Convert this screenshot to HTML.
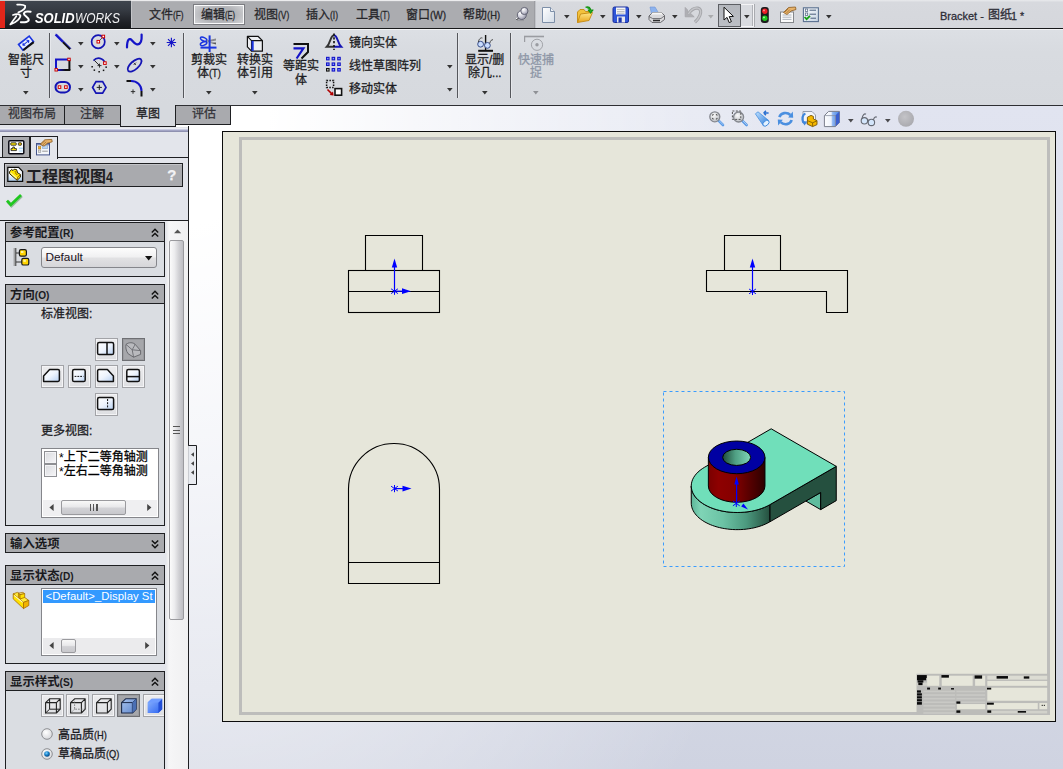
<!DOCTYPE html>
<html lang="zh"><head><meta charset="utf-8"><title>Bracket - 图纸1 * - SOLIDWORKS</title>
<style>
html,body{margin:0;padding:0}
body{width:1063px;height:769px;position:relative;overflow:hidden;background:#d8dbe0;font-family:"Liberation Sans",sans-serif}
#app{position:absolute;left:0;top:0;width:1063px;height:769px;overflow:hidden}
#app>div,#app>svg{position:absolute}
svg.t,svg.i{overflow:visible;display:block}
svg.t text{font-family:"Liberation Sans","Noto Sans CJK SC",sans-serif}
.lt{white-space:nowrap;line-height:1.15;font-family:"Liberation Sans",sans-serif}
.lg{font-family:"Liberation Sans",sans-serif;font-style:italic;font-size:14.2px;color:#fff;white-space:nowrap;line-height:1.15;transform:scaleX(.91);transform-origin:0 0}
.lw{font-weight:normal;color:#f1f1f3;transform:scaleX(.84)}
</style></head><body>
<div id="app">
<div style="left:189px;top:106px;width:874px;height:663px;background:radial-gradient(ellipse 660px 990px at 0% 0%,#fff 0%,#fff 12%,rgba(255,255,255,0) 100%),linear-gradient(180deg,#e1e4f0 0%,#dbdeec 45%,#d2d6e3 88%,#cfd3e1 100%)"></div>
<div style="left:222px;top:131px;width:834px;height:591px;box-sizing:border-box;background:#e6e6da;border:1px solid #0c0c0c"></div>
<div style="left:239px;top:137px;width:811px;height:578px;box-sizing:border-box;border:3px solid #bdbdbb"></div>
<svg class="i" style="left:708px;top:110px;" width="18" height="18"><defs><radialGradient id="mg" cx=".4" cy=".35" r=".7"><stop offset="0" stop-color="#fafafa"/><stop offset="1" stop-color="#b9bcc2"/></radialGradient><linearGradient id="hb" x1="0" y1="0" x2="1" y2="1"><stop offset="0" stop-color="#bfe0ff"/><stop offset="1" stop-color="#2a7ad8"/></linearGradient></defs><path d="M10.6 10.6L15 15" stroke="#5a9ae6" stroke-width="2.6" stroke-linecap="round"/><path d="M10.8 10.4L15 14.6" stroke="#b8d8fa" stroke-width=".8" stroke-linecap="round"/><circle cx="6.8" cy="6.8" r="5" fill="url(#mg)" stroke="#85888f" stroke-width="1.3"/><path d="M4.6 5.7V4.6H5.7M7.9 4.6H9V5.7M9 7.9V9H7.9M5.7 9H4.6V7.9" fill="none" stroke="#555" stroke-width="1"/></svg>
<svg class="i" style="left:731px;top:110px;" width="18" height="18"><path d="M11.4 10.8L15.6 15" stroke="#5a9ae6" stroke-width="2.6" stroke-linecap="round"/><path d="M11.6 10.6L15.6 14.6" stroke="#b8d8fa" stroke-width=".8" stroke-linecap="round"/><circle cx="7.6" cy="7" r="5" fill="url(#mg)" stroke="#85888f" stroke-width="1.3"/><rect x="1.4" y="1" width="8.4" height="8.4" fill="none" stroke="#555" stroke-width="1" stroke-dasharray="2 1.4"/></svg>
<svg class="i" style="left:754px;top:110px;" width="18" height="18"><path d="M1.4 3.8L4 1.8L14.8 10.6L9.4 15.8Z" fill="url(#hb)" stroke="#3a86dc" stroke-width=".7" stroke-linejoin="round"/><ellipse cx="12" cy="13.2" rx="3.6" ry="2.3" transform="rotate(-42 12 13.2)" fill="#e4f2ff" stroke="#3a86dc" stroke-width=".9"/><path d="M9.6 3H14.6M9.6 3L12 .9M9.6 3L12 5.1" fill="none" stroke="#2a6fd0" stroke-width="1.4"/></svg>
<svg class="i" style="left:777px;top:110px;" width="18" height="18"><path d="M2.4 7.2C3.6 2.6 10 1.6 13.4 5" fill="none" stroke="#4a8fe0" stroke-width="2.6"/><path d="M11.2 7.4L16.2 7.8L15.8 1.6Z" fill="#4a8fe0"/><path d="M14.6 10C13.4 14.6 7 15.6 3.6 12.2" fill="none" stroke="#4a8fe0" stroke-width="2.6"/><path d="M5.8 9.8L.8 9.4L1.2 15.6Z" fill="#4a8fe0"/></svg>
<svg class="i" style="left:800px;top:110px;" width="19" height="18"><path d="M3 1.5H12L15.5 5V13H3Z" fill="#f2f4f8" stroke="#8a93a4" stroke-width=".9"/><path d="M5.4 3.6C2.4 4.8 1.4 9 3.6 12.6" fill="none" stroke="#3f86dc" stroke-width="2.2"/><path d="M1.6 11L4.6 15.4L7.2 11.4Z" fill="#3f86dc"/><path d="M7.4 7.2L11 5.4L13.4 6.4V9L17 10.6V14.6L12.6 16.6L7.4 14.2Z" fill="#f5b800" stroke="#7a5600" stroke-width=".9" stroke-linejoin="round"/><path d="M7.4 10.6L12.6 12.8L17 10.8M12.6 12.8V16.4" fill="none" stroke="#7a5600" stroke-width=".8"/></svg>
<svg class="i" style="left:823px;top:110px;" width="18" height="18"><defs><linearGradient id="hc" x1="0" y1="0" x2="1" y2="0"><stop offset="0" stop-color="#fdfdfe"/><stop offset=".45" stop-color="#eef3fb"/><stop offset=".55" stop-color="#8db6f2"/><stop offset="1" stop-color="#4a86e4"/></linearGradient></defs><path d="M1.4 5.6L5.6 1.4H16.4V12.4L12.4 16.6H1.4Z" fill="url(#hc)" stroke="#7a7f8c" stroke-width="1" stroke-linejoin="round"/><path d="M12.4 5.6L16.4 1.4V12.4L12.4 16.6Z" fill="#3a5fd0"/><path d="M1.4 5.6H12.4V16.6" fill="none" stroke="#8a90a0" stroke-width=".8"/></svg>
<svg class="i" style="left:848px;top:119px;" width="6" height="4"><path d="M0 0H5.6L2.8 3.4Z" fill="#4a4a4e"/></svg>
<svg class="i" style="left:860px;top:112px;" width="18" height="15"><circle cx="4.4" cy="8.8" r="3.2" fill="#d4e6fb" stroke="#666a74" stroke-width="1.1"/><circle cx="11.4" cy="10.4" r="3.2" fill="#d4e6fb" stroke="#666a74" stroke-width="1.1"/><path d="M7.4 8.6C8 7.8 8.6 8 8.8 8.8M2 6.6C2.6 3 4.4 1.2 6 2.2M13.4 7.8C14.2 5.2 15.6 4.4 16.8 5.2" fill="none" stroke="#666a74" stroke-width="1.1"/></svg>
<svg class="i" style="left:885px;top:119px;" width="6" height="4"><path d="M0 0H5.6L2.8 3.4Z" fill="#4a4a4e"/></svg>
<svg class="i" style="left:897px;top:110px;" width="18" height="18"><defs><radialGradient id="gs" cx=".42" cy=".38" r=".65"><stop offset="0" stop-color="#c4c4c8"/><stop offset="1" stop-color="#a9a9ae"/></radialGradient></defs><circle cx="9" cy="8.8" r="8" fill="url(#gs)"/></svg>
<svg class="i" style="left:189px;top:106px;" width="874" height="663" viewBox="189 106 874 663"><g fill="none" stroke="#000" stroke-width="1.1"><path d="M365.5 270.5V235.5H422.5V270.5"/><rect x="348.5" y="270.5" width="91" height="42"/><path d="M348.5 291.5H439.5"/><path d="M724.5 270.5V235.5H780.5V270.5"/><path d="M706.5 270.5H847.5V312.5H826.5V291.5H706.5Z"/><path d="M348.5 583.5V489A45.5 45.5 0 0 1 439.5 489V583.5Z"/><path d="M348.5 562.5H439.5"/></g><path d="M394.5 291V264.5" stroke="#0000ff" stroke-width="1.2"/><path d="M394.5 258.5L397.2 267.5H391.8Z" fill="#0000ff"/><path d="M394.5 291.2H405" stroke="#0000ff" stroke-width="1.2"/><path d="M411 291.2L402 288.3V294.1Z" fill="#0000ff"/><path d="M394.5 287.6V294.8M391.1 288.8L397.9 293.6M397.9 288.8L391.1 293.6" stroke="#0000ff" stroke-width="1" fill="none"/><path d="M752.5 291V264.5" stroke="#0000ff" stroke-width="1.2"/><path d="M752.5 258.5L755.2 267.5H749.8Z" fill="#0000ff"/><path d="M752.5 287.8V295M749.1 289L755.9 293.8M755.9 289L749.1 293.8" stroke="#0000ff" stroke-width="1" fill="none"/><path d="M394.5 488.6H405.5" stroke="#0000ff" stroke-width="1.2"/><path d="M411.5 488.6L402.5 485.7V491.5Z" fill="#0000ff"/><path d="M394.5 485V492.2M391.1 486.2L397.9 491M397.9 486.2L391.1 491" stroke="#0000ff" stroke-width="1" fill="none"/><rect x="663.5" y="391.5" width="181" height="175" fill="none" stroke="#3a9cff" stroke-width="1" stroke-dasharray="3 3"/><defs><linearGradient id="cyl" x1="0" y1="0" x2="1" y2="0"><stop offset="0" stop-color="#7a0000"/><stop offset=".18" stop-color="#8e0000"/><stop offset=".45" stop-color="#860000"/><stop offset=".7" stop-color="#5c0000"/><stop offset="1" stop-color="#2c0000"/></linearGradient><linearGradient id="rnd" x1="0" y1="0" x2="1" y2="0"><stop offset="0" stop-color="#5cb598"/><stop offset=".12" stop-color="#7fd4b6"/><stop offset=".4" stop-color="#6cc3a5"/><stop offset=".7" stop-color="#4c9a7f"/><stop offset="1" stop-color="#25503f"/></linearGradient><linearGradient id="hol" x1="0" y1="0" x2="1" y2="0"><stop offset="0" stop-color="#1f4a3a"/><stop offset=".45" stop-color="#4f9f83"/><stop offset="1" stop-color="#7fd6b8"/></linearGradient></defs><path d="M820.70 492.48L820.70 509.63L805.85 501.05Z" fill="#5fbc9e" stroke="#000" stroke-width="1" stroke-linejoin="round"/><path d="M836.25 466.35L769.79 504.73L769.79 521.87L820.70 492.48L820.70 509.63L836.25 500.65Z" fill="#25503f" stroke="#000" stroke-width="1" stroke-linejoin="round"/><path d="M769.79 504.73L767.81 505.80L765.74 506.80L763.56 507.73L761.29 508.59L758.94 509.37L756.52 510.06L754.02 510.68L751.47 511.20L748.87 511.64L746.23 511.99L743.56 512.25L740.87 512.42L738.16 512.50L735.45 512.48L732.75 512.38L730.06 512.18L727.40 511.89L724.77 511.51L722.19 511.04L719.66 510.48L717.18 509.84L714.78 509.12L712.46 508.31L710.22 507.43L708.08 506.48L706.03 505.45L704.10 504.35L702.28 503.19L700.58 501.98L699.01 500.70L697.57 499.38L696.27 498.00L695.11 496.59L694.10 495.14L693.24 493.66L692.53 492.15L691.98 490.62L691.58 489.07L691.34 487.51L691.26 485.95L691.26 503.09L691.34 504.66L691.58 506.22L691.98 507.76L692.53 509.29L693.24 510.80L694.10 512.29L695.11 513.74L696.27 515.15L697.57 516.52L699.01 517.85L700.58 519.12L702.28 520.34L704.10 521.50L706.03 522.59L708.08 523.62L710.22 524.58L712.46 525.46L714.78 526.26L717.18 526.99L719.66 527.63L722.19 528.18L724.77 528.65L727.40 529.03L730.06 529.32L732.75 529.52L735.45 529.63L738.16 529.64L740.87 529.57L743.56 529.40L746.23 529.14L748.87 528.79L751.47 528.35L754.02 527.82L756.52 527.21L758.94 526.51L761.29 525.74L763.56 524.88L765.74 523.95L767.81 522.94L769.79 521.87Z" fill="url(#rnd)" stroke="#000" stroke-width="1" stroke-linejoin="round"/><path d="M771.20 428.80L836.25 466.35L769.79 504.73L767.13 506.14L764.30 507.43L761.29 508.59L758.14 509.61L754.86 510.48L751.47 511.20L748.00 511.77L744.46 512.18L740.87 512.42L737.26 512.50L733.65 512.42L730.06 512.18L726.52 511.77L723.04 511.20L719.66 510.48L716.38 509.61L713.22 508.59L710.22 507.43L707.38 506.14L704.73 504.73L702.28 503.19L700.04 501.56L698.04 499.82L696.27 498.00L694.76 496.11L693.51 494.15L692.53 492.15L691.83 490.10L691.40 488.03L691.26 485.95L691.40 483.86L691.83 481.79L692.53 479.75L693.51 477.74L694.76 475.79L696.27 473.89L698.04 472.07L700.04 470.34L702.28 468.70L704.73 467.17Z" fill="#70dfba" stroke="#000" stroke-width="1" stroke-linejoin="round"/><path d="M708.36 457.37V485.95A28.30 16.34 0 0 0 764.96 485.95V457.37Z" fill="url(#cyl)" stroke="#000" stroke-width="1"/><ellipse cx="736.66" cy="457.37" rx="28.30" ry="16.34" fill="#0000a2" stroke="#000" stroke-width="1"/><ellipse cx="736.66" cy="457.37" rx="14.00" ry="8.08" fill="url(#hol)" stroke="#000" stroke-width="1"/><clipPath id="hc2"><ellipse cx="736.66" cy="457.37" rx="13.50" ry="7.58"/></clipPath><path d="M736.6 503.4V483" stroke="#0000ff" stroke-width="1.2"/><path d="M736.6 476.6L738.9 484.4H734.3Z" fill="#0000ff"/><path d="M736.3 499.8V507M732.9 501L739.7 505.8M739.7 501L732.9 505.8" stroke="#0000ff" stroke-width="1" fill="none"/><path d="M741.2 506.6L748 509.6L743.4 503.6Z" fill="#0000ff"/></svg>
<svg class="i" style="left:910px;top:670px;filter:blur(.3px)" width="145" height="48" viewBox="910 670 145 48"><rect x="916.53" y="673.76" width="131.65" height="40.52" fill="#bcbcb9"/><rect x="927.10" y="675.71" width="12.21" height="10.09" fill="#e6e6da"/><rect x="941.75" y="675.71" width="30.92" height="10.09" fill="#e6e6da"/><rect x="975.11" y="675.71" width="10.09" height="10.09" fill="#e6e6da"/><rect x="917.34" y="682.55" width="9.76" height="3.25" fill="#d4d4cd"/><rect x="987.31" y="675.71" width="59.89" height="3.91" fill="#dcdcd3"/><rect x="987.31" y="680.92" width="59.89" height="4.88" fill="#e6e6da"/><rect x="987.31" y="687.75" width="59.89" height="13.02" fill="#e6e6da"/><rect x="987.31" y="703.05" width="50.45" height="6.18" fill="#e6e6da"/><rect x="1039.39" y="703.05" width="7.81" height="6.18" fill="#e6e6da"/><rect x="987.31" y="710.86" width="59.89" height="2.60" fill="#d2d2cb"/><rect x="923.36" y="690.68" width="31.73" height="1.63" fill="#c9c9c5"/><rect x="956.40" y="690.68" width="28.80" height="1.63" fill="#c9c9c5"/><rect x="923.36" y="694.26" width="31.73" height="1.63" fill="#c9c9c5"/><rect x="956.40" y="694.26" width="28.80" height="1.63" fill="#c9c9c5"/><rect x="923.36" y="697.84" width="31.73" height="1.63" fill="#c9c9c5"/><rect x="956.40" y="697.84" width="28.80" height="1.63" fill="#c9c9c5"/><rect x="923.36" y="701.42" width="31.73" height="1.63" fill="#c9c9c5"/><rect x="956.40" y="701.42" width="28.80" height="1.63" fill="#c9c9c5"/><rect x="923.36" y="705.00" width="31.73" height="1.63" fill="#c9c9c5"/><rect x="923.36" y="708.58" width="31.73" height="1.63" fill="#c9c9c5"/><rect x="923.36" y="712.16" width="31.73" height="1.63" fill="#c9c9c5"/><rect x="957.05" y="704.03" width="28.15" height="5.21" fill="#e6e6da"/><rect x="917.01" y="675.06" width="9.76" height="2.93" fill="#0a0a0a"/><rect x="917.01" y="677.99" width="9.11" height="2.28" fill="#0a0a0a"/><rect x="917.66" y="680.27" width="5.70" height="2.28" fill="#0a0a0a"/><rect x="918.32" y="682.55" width="4.23" height="2.60" fill="#0a0a0a"/><rect x="941.42" y="675.06" width="7.49" height="2.60" fill="#0a0a0a"/><rect x="974.62" y="675.39" width="7.49" height="3.25" fill="#0a0a0a"/><rect x="996.59" y="676.04" width="11.39" height="2.60" fill="#0a0a0a"/><rect x="1023.77" y="676.36" width="5.53" height="2.28" fill="#0a0a0a"/><rect x="927.10" y="687.59" width="2.93" height="1.95" fill="#0a0a0a"/><rect x="938.17" y="687.59" width="2.77" height="1.95" fill="#0a0a0a"/><rect x="951.03" y="688.08" width="2.93" height="1.46" fill="#0a0a0a"/><rect x="986.99" y="687.75" width="4.23" height="1.79" fill="#0a0a0a"/><rect x="917.01" y="690.36" width="3.91" height="2.28" fill="#0a0a0a"/><rect x="917.01" y="693.29" width="4.88" height="2.28" fill="#0a0a0a"/><rect x="917.01" y="696.22" width="4.88" height="2.28" fill="#0a0a0a"/><rect x="917.01" y="699.15" width="4.88" height="2.28" fill="#0a0a0a"/><rect x="917.01" y="702.07" width="4.88" height="2.60" fill="#0a0a0a"/><rect x="956.40" y="701.42" width="3.91" height="2.28" fill="#0a0a0a"/><rect x="986.99" y="702.73" width="6.83" height="1.95" fill="#0a0a0a"/><rect x="956.40" y="710.37" width="3.91" height="2.44" fill="#0a0a0a"/><rect x="987.31" y="710.37" width="3.91" height="2.44" fill="#0a0a0a"/><rect x="1017.75" y="711.03" width="8.30" height="1.63" fill="#0a0a0a"/><rect x="1041.67" y="704.84" width="1.14" height="0.98" fill="#0a0a0a"/><rect x="1043.78" y="704.84" width="1.14" height="0.98" fill="#0a0a0a"/></svg>
<div style="left:0px;top:0px;width:131px;height:28px;background:linear-gradient(#40464f 0%,#363b43 35%,#1f2126 80%,#17191d 100%)"></div>
<div style="left:0px;top:0px;width:5px;height:28px;background:#e2261a"></div>
<div style="left:0px;top:0px;width:131px;height:1px;background:#c9cacc"></div>
<div style="left:131px;top:0px;width:404px;height:28px;background:linear-gradient(#ececee 0,#ececee 1px,#b9babe 1px,#abacb0 2.4px,#abacb0 100%)"></div>
<div style="left:131px;top:1px;width:1px;height:27px;background:#c4c5c9"></div>
<div style="left:534px;top:1px;width:1px;height:27px;background:#9c9da2"></div>
<div style="left:535px;top:0px;width:528px;height:28px;background:linear-gradient(#e9eaed 0%,#d7d9de 8%,#d5d7dc 100%)"></div>
<div style="left:535px;top:1px;width:1px;height:27px;background:#c2c4c9"></div>
<div style="left:0px;top:28px;width:1063px;height:1px;background:#17181a"></div>
<div style="left:0px;top:29px;width:1063px;height:1px;background:#f3f4f6"></div>
<svg class="i" style="left:8.8px;top:3px;" width="24" height="24"><g fill="none" stroke="#fff" stroke-linecap="round" stroke-linejoin="round">
<path d="M8.2 1.7C11 1.4 14.8 1.6 16.2 2.9C16.6 4.8 14 7.6 9.4 9.4" stroke-width="1.8"/>
<path d="M3.9 12C6 11.3 9.8 10.8 11.4 12.4C11.8 15 7.6 19.4 1.3 21.5C3.2 18.8 5.6 15.4 7.3 13.2" stroke-width="1.7"/>
<path d="M21.6 8.7C19 8.3 15.3 8.6 14.9 10.6C14.7 12.6 19.4 14.4 19.7 16.6C20 19 15.6 19.5 11.8 19.2" stroke-width="2"/></g></svg>
<div class="lg" style="left:35.2px;top:9.6px"><b>SOLID</b></div>
<div class="lg lw" style="left:75px;top:9.6px">WORKS</div>
<svg class="t" role="img" aria-label="文件(F)" style="left:148.5px;top:7.2px" width="37" height="19" fill="#26262a" stroke="#26262a" stroke-width="22"><text stroke-width=".26" x="0" y="12.20" font-size="12">文件</text><text stroke-width=".28" x="24.00" y="12.20" font-size="10.80" textLength="10.62" lengthAdjust="spacingAndGlyphs" xml:space="preserve">(F)</text></svg>
<div style="left:193px;top:4px;width:52px;height:21px;border:1px solid #7c7d82;box-sizing:border-box;background:radial-gradient(ellipse 60% 75% at 50% 50%,#aeafb3 0%,#b3b4b8 55%,#d2d3d6 100%);box-shadow:inset 0 0 0 1px #fafafb"></div>
<svg class="t" role="img" aria-label="编辑(E)" style="left:201px;top:7.2px" width="37" height="19" fill="#26262a" stroke="#26262a" stroke-width="22"><text stroke-width=".26" x="0" y="12.20" font-size="12">编辑</text><text stroke-width=".28" x="24.00" y="12.20" font-size="10.80" textLength="10.08" lengthAdjust="spacingAndGlyphs" xml:space="preserve">(E)</text></svg>
<svg class="t" role="img" aria-label="视图(V)" style="left:253.5px;top:7.2px" width="38" height="19" fill="#26262a" stroke="#26262a" stroke-width="22"><text stroke-width=".26" x="0" y="12.20" font-size="12">视图</text><text stroke-width=".28" x="24.00" y="12.20" font-size="10.80" textLength="11.23" lengthAdjust="spacingAndGlyphs" xml:space="preserve">(V)</text></svg>
<svg class="t" role="img" aria-label="插入(I)" style="left:306px;top:7.2px" width="35" height="19" fill="#26262a" stroke="#26262a" stroke-width="22"><text stroke-width=".26" x="0" y="12.20" font-size="12">插入</text><text stroke-width=".28" x="24.00" y="12.20" font-size="10.80" textLength="8.05" lengthAdjust="spacingAndGlyphs" xml:space="preserve">(I)</text></svg>
<svg class="t" role="img" aria-label="工具(T)" style="left:355.5px;top:7.2px" width="36" height="19" fill="#26262a" stroke="#26262a" stroke-width="22"><text stroke-width=".26" x="0" y="12.20" font-size="12">工具</text><text stroke-width=".28" x="24.00" y="12.20" font-size="10.80" textLength="9.65" lengthAdjust="spacingAndGlyphs" xml:space="preserve">(T)</text></svg>
<svg class="t" role="img" aria-label="窗口(W)" style="left:406px;top:7.2px" width="43" height="19" fill="#26262a" stroke="#26262a" stroke-width="22"><text stroke-width=".26" x="0" y="12.20" font-size="12">窗口</text><text stroke-width=".28" x="24.00" y="12.20" font-size="10.80" textLength="16.17" lengthAdjust="spacingAndGlyphs" xml:space="preserve">(W)</text></svg>
<svg class="t" role="img" aria-label="帮助(H)" style="left:462.5px;top:7.2px" width="40" height="19" fill="#26262a" stroke="#26262a" stroke-width="22"><text stroke-width=".26" x="0" y="12.20" font-size="12">帮助</text><text stroke-width=".28" x="24.00" y="12.20" font-size="10.80" textLength="13.04" lengthAdjust="spacingAndGlyphs" xml:space="preserve">(H)</text></svg>
<svg class="i" style="left:515px;top:6px;" width="15" height="16"><defs><radialGradient id="pn" cx=".35" cy=".3" r=".8"><stop offset="0" stop-color="#fff"/><stop offset=".45" stop-color="#d4d4de"/><stop offset="1" stop-color="#8a8a9e"/></radialGradient></defs>
<path d="M1.2 13.4L4.4 11.6" stroke="#3a3a3e" stroke-width="1.4"/><path d="M1 12.8L4 11" stroke="#f4f4f6" stroke-width="1"/><path d="M2 14.6H9" stroke="#8e8f94" stroke-width="1" opacity=".7"/>
<circle cx="6.8" cy="9" r="4.5" fill="url(#pn)" stroke="#5c5d6e" stroke-width=".9"/><circle cx="9.4" cy="5" r="3.6" fill="url(#pn)" stroke="#5c5d6e" stroke-width=".9"/></svg>
<svg class="i" style="left:541px;top:6px;" width="16" height="18"><defs><linearGradient id="nd" x1="0" y1="0" x2="1" y2="1"><stop offset="0" stop-color="#fff"/><stop offset="1" stop-color="#d4dde8"/></linearGradient></defs>
<path d="M1.5 1.5H9.5L13.5 5.5V16.5H1.5Z" fill="url(#nd)" stroke="#7d8fa8" stroke-width="1"/><path d="M9.5 1.5V5.5H13.5" fill="#eef2f7" stroke="#7d8fa8" stroke-width="1"/></svg>
<svg class="i" style="left:564px;top:15px;" width="6" height="4"><path d="M0 0H5.6L2.8 3.4Z" fill="#333"/></svg>
<svg class="i" style="left:576px;top:5px;" width="18" height="19"><defs><linearGradient id="of" x1="0" y1="0" x2="0" y2="1"><stop offset="0" stop-color="#ffe88a"/><stop offset="1" stop-color="#e9a51c"/></linearGradient></defs>
<path d="M1.5 17.5 L1.5 7 L4 4.5 L8 4.5 L9.5 6.5 L13 6.5 L13 9" fill="#f3c23c" stroke="#c48a12" stroke-width=".9"/>
<path d="M1.5 17.5 L4.5 9 L16.5 7.5 L13 15.5 Z" fill="url(#of)" stroke="#c48a12" stroke-width=".9"/>
<path d="M9.5 2.2 C12.5 1.2 14.6 2.6 14.6 5.4 M12.2 5 L14.6 8 L17 5 Z" fill="#22b322" stroke="#129012" stroke-width="1.2" stroke-linejoin="round"/></svg>
<svg class="i" style="left:599.5px;top:15px;" width="6" height="4"><path d="M0 0H5.6L2.8 3.4Z" fill="#333"/></svg>
<svg class="i" style="left:612px;top:6px;" width="18" height="18"><rect x="1" y="1" width="15.5" height="15.5" rx="1.5" fill="#2f55d8" stroke="#1a2f9c" stroke-width="1"/>
<rect x="4" y="1.5" width="9.5" height="7" fill="#f4f4f4"/><path d="M5 3.5H12.5M5 5.5H12.5M5 7.2H12.5" stroke="#aaa" stroke-width=".7"/>
<rect x="5" y="10.5" width="8" height="6" fill="#e8e8ec"/><rect x="6.5" y="11.5" width="3.2" height="5" fill="#1c37b0"/></svg>
<svg class="i" style="left:635.5px;top:15px;" width="6" height="4"><path d="M0 0H5.6L2.8 3.4Z" fill="#333"/></svg>
<svg class="i" style="left:648px;top:6px;" width="18" height="18"><path d="M3.5 8 L2 1 L7 1 L10 6" fill="#8db3ee" stroke="#6f94d4" stroke-width=".6"/>
<path d="M1 10 L4.5 6.5 L13.5 6.5 L16.5 9.5 L16.5 13.5 L12.5 16.5 L4 16.5 L1 13.5 Z" fill="#d9d9dc" stroke="#5c5c60" stroke-width=".9"/>
<path d="M1 10.5 L4.5 12.5 L13 12.5 L16.5 9.8" fill="none" stroke="#5c5c60" stroke-width=".8"/><path d="M5 14.5H12" stroke="#2b2b2b" stroke-width="1.6"/><path d="M4.5 6.5H13.5L15 8.5H3Z" fill="#f6f6f6"/></svg>
<svg class="i" style="left:672px;top:15px;" width="6" height="4"><path d="M0 0H5.6L2.8 3.4Z" fill="#333"/></svg>
<svg class="i" style="left:684px;top:6px;" width="19" height="18"><path d="M4.8 7.4C7 4 10.6 1.7 13.8 2.1C16.9 2.7 17.4 6 15.8 9.6C14.6 12.4 12.8 14.6 10.9 16.2" fill="none" stroke="#a4a5a9" stroke-width="3.2" stroke-linecap="butt"/><path d="M1.2 1.4V10.8H10.2L7.4 8.2L3.8 8.4L3.6 4Z" fill="#aeafb3" stroke="#a4a5a9" stroke-width=".8" stroke-linejoin="round"/><path d="M4.8 7.4C7 4 10.6 1.7 13.8 2.1C16.9 2.7 17.4 6 15.8 9.6C14.6 12.4 12.8 14.6 10.9 16.2" fill="none" stroke="#c4c5c9" stroke-width="1.4"/></svg>
<svg class="i" style="left:707.5px;top:15px;" width="6" height="4"><path d="M0 0H5.6L2.8 3.4Z" fill="#aaabad"/></svg>
<div style="left:718px;top:4px;width:23px;height:23px;box-sizing:border-box;border:1px solid #5d5f64;background:linear-gradient(#b4b7bd,#bcbfc5)"></div>
<div style="left:741px;top:4px;width:13px;height:23px;box-sizing:border-box;border:1px solid #f4f4f6;border-left:none;background:#d9dbe0;box-shadow:inset -1px 0 0 #b0b2b7, 1px 0 0 #a9abb0"></div>
<svg class="i" style="left:722px;top:6px;" width="14" height="18"><path d="M2 1.2 L2 14 L5 11.4 L7.2 16.6 L9.4 15.6 L7.2 10.6 L11.4 10.4 Z" fill="#fff" stroke="#111" stroke-width="1" stroke-linejoin="round"/></svg>
<svg class="i" style="left:743.6px;top:15px;" width="6" height="4"><path d="M0 0H5.6L2.8 3.4Z" fill="#333"/></svg>
<svg class="i" style="left:760px;top:6px;" width="10" height="18"><rect x=".8" y="1" width="8" height="16" rx="3" fill="#1c1c1c"/><circle cx="4.8" cy="5.2" r="2.7" fill="#ee1c24"/><circle cx="4" cy="4.4" r=".9" fill="#ff9a9a"/><circle cx="4.8" cy="12.2" r="2.7" fill="#1ec81e"/><circle cx="4" cy="11.4" r=".9" fill="#a8ffa8"/></svg>
<svg class="i" style="left:779px;top:5px;" width="18" height="19"><rect x="1.5" y="7" width="13" height="10.5" fill="#fafafa" stroke="#85888c" stroke-width="1"/><path d="M3.5 10H12.5M3.5 12.2H12.5M3.5 14.4H12.5" stroke="#9aa3ae" stroke-width=".8"/>
<path d="M4.5 7.5 L9.5 2.5 L16.5 2 L17 4.5 L12 6 L8 9.5 Z" fill="#e8b36a" stroke="#8a5a20" stroke-width=".8" stroke-linejoin="round"/><path d="M6 7 L9.5 3.5 M7.5 8 L10.8 4.6" stroke="#8a5a20" stroke-width=".6"/></svg>
<svg class="i" style="left:802px;top:6px;" width="18" height="17"><defs><linearGradient id="ol" x1="0" y1="0" x2="1" y2="1"><stop offset="0" stop-color="#fff"/><stop offset="1" stop-color="#c4d2e2"/></linearGradient></defs>
<rect x="1.4" y="1.8" width="15" height="13.8" fill="url(#ol)" stroke="#5a7090" stroke-width="1.1"/><rect x="3.3" y="3" width="2.4" height="2.4" fill="#fff" stroke="#4a5f7c" stroke-width=".7"/><rect x="3.3" y="7" width="2.4" height="2.4" fill="#fff" stroke="#4a5f7c" stroke-width=".7"/>
<path d="M7.5 4.2H14M7.5 8.2H14M8.5 12.2H14" stroke="#4a5f7c" stroke-width="1"/><path d="M2.6 11 L4.6 13.2 L8 9.8" fill="none" stroke="#16a016" stroke-width="1.8"/></svg>
<svg class="i" style="left:825.6px;top:15px;" width="6" height="4"><path d="M0 0H5.6L2.8 3.4Z" fill="#333"/></svg>
<svg class="t" role="img" aria-label="Bracket - " style="left:939.5px;top:7.6px" width="49" height="19" fill="#2c2c36" stroke="#2c2c36" stroke-width="22"><text stroke-width=".28" x="0.00" y="12.20" font-size="11.30" textLength="46.90" lengthAdjust="spacingAndGlyphs" xml:space="preserve">Bracket - </text></svg>
<svg class="t" role="img" aria-label="图纸" style="left:987.5px;top:7.2px" width="26" height="19" fill="#2c2c36" stroke="#2c2c36" stroke-width="22"><text stroke-width=".26" x="0" y="12.20" font-size="12">图纸</text></svg>
<svg class="t" role="img" aria-label="1 *" style="left:1011px;top:7.6px" width="16" height="19" fill="#2c2c36" stroke="#2c2c36" stroke-width="22"><text stroke-width=".28" x="0.00" y="12.20" font-size="11.30" textLength="13.13" lengthAdjust="spacingAndGlyphs" xml:space="preserve">1 *</text></svg>
<div style="left:0px;top:30px;width:1063px;height:75px;background:linear-gradient(#dcdfe4,#d8dbe0 30%,#d6d9de)"></div>
<div style="left:0px;top:105px;width:1063px;height:1px;background:#2e2f33"></div>
<div style="left:49px;top:33px;width:1px;height:65px;background:#55575c"></div>
<div style="left:50px;top:33px;width:1px;height:65px;background:#e6e8ec"></div>
<div style="left:183px;top:33px;width:1px;height:65px;background:#55575c"></div>
<div style="left:184px;top:33px;width:1px;height:65px;background:#e6e8ec"></div>
<div style="left:457px;top:33px;width:1px;height:65px;background:#55575c"></div>
<div style="left:458px;top:33px;width:1px;height:65px;background:#e6e8ec"></div>
<div style="left:510px;top:33px;width:1px;height:65px;background:#55575c"></div>
<div style="left:511px;top:33px;width:1px;height:65px;background:#e6e8ec"></div>
<svg class="i" style="left:17px;top:35px;" width="18" height="17"><g transform="rotate(-38 9 8)"><rect x="2.2" y="4.6" width="13.5" height="7" fill="#e8eefc" stroke="#1a35e0" stroke-width="1.6"/><path d="M2.4 12H15.6" stroke="#111" stroke-width="2"/><path d="M5 7.8H13M5 7.8l2-1.6M5 7.8l2 1.6M13 7.8l-2-1.6M13 7.8l-2 1.6" stroke="#1a35e0" stroke-width="1" fill="none"/></g></svg>
<svg class="t" role="img" aria-label="智能尺" style="left:8px;top:51.6px" width="38" height="19" fill="#1c1c22" stroke="#1c1c22" stroke-width="22"><text stroke-width=".26" x="0" y="12.20" font-size="12">智能尺</text></svg>
<svg class="t" role="img" aria-label="寸" style="left:20px;top:65px" width="14" height="19" fill="#1c1c22" stroke="#1c1c22" stroke-width="22"><text stroke-width=".26" x="0" y="12.20" font-size="12">寸</text></svg>
<svg class="i" style="left:23px;top:91px;" width="6" height="4"><path d="M0 0H5.6L2.8 3.4Z" fill="#333"/></svg>
<svg class="i" style="left:54px;top:33px;" width="18" height="18"><path d="M1.5 1.5L9 9" stroke="#1414c8" stroke-width="2.2"/><path d="M9 9L16.2 16.2" stroke="#111" stroke-width="2.2"/><path d="M1.5 1.5L16.2 16.2" stroke="#1414c8" stroke-width=".9" transform="translate(.7 -.7)"/></svg>
<svg class="i" style="left:54px;top:57px;" width="18" height="17"><defs><linearGradient id="rb2" gradientUnits="userSpaceOnUse" x1="1" y1="0" x2="16" y2="0"><stop offset=".2" stop-color="#1414c8"/><stop offset=".7" stop-color="#111"/></linearGradient></defs><path d="M2 13V2.6H15" fill="none" stroke="#1414c8" stroke-width="2"/><path d="M15.4 2.6V13" fill="none" stroke="#111" stroke-width="2"/><path d="M1 13H16.4" stroke="url(#rb2)" stroke-width="2"/><rect x="13.8" y="1.2" width="2.4" height="2.4" fill="#fff" stroke="#c80000" stroke-width="1"/><rect x="1" y="11.6" width="2.4" height="2.4" fill="#fff" stroke="#c80000" stroke-width="1"/></svg>
<svg class="i" style="left:54px;top:80px;" width="18" height="15"><rect x="1.5" y="2" width="14.5" height="10.4" rx="5.2" fill="none" stroke="#1414b4" stroke-width="2"/><rect x="4.2" y="5.8" width="2.6" height="2.6" fill="#fff" stroke="#d00000" stroke-width="1"/><rect x="10.6" y="5.8" width="2.6" height="2.6" fill="#fff" stroke="#d00000" stroke-width="1"/></svg>
<svg class="i" style="left:90px;top:33px;" width="18" height="18"><circle cx="8.2" cy="8.8" r="6.6" fill="none" stroke="#1414b4" stroke-width="1.7"/><path d="M8.2 8.8L13 4" stroke="#333" stroke-width=".8"/><rect x="7" y="7.4" width="2.6" height="2.6" fill="#fff" stroke="#d00000" stroke-width="1"/><rect x="12" y="2.2" width="2.6" height="2.6" fill="#fff" stroke="#d00000" stroke-width="1"/></svg>
<svg class="i" style="left:90px;top:56px;" width="18" height="18"><path d="M3.5 4.6C7 .6 13.2 1.8 15 7" fill="none" stroke="#1414b4" stroke-width="1.7"/><path d="M4.5 4.5L9.5 9.6" stroke="#222" stroke-width="1"/><path d="M9.5 7.6v4M7.5 9.6h4" stroke="#222" stroke-width=".9"/><rect x="13.6" y="5.8" width="2.6" height="2.6" fill="#fff" stroke="#d00000" stroke-width="1"/><g fill="#111"><rect x="1.4" y="10" width="1.5" height="1.5"/><rect x="3.6" y="13.4" width="1.5" height="1.5"/><rect x="8.4" y="15" width="1.5" height="1.5"/><rect x="12.8" y="13.6" width="1.5" height="1.5"/><rect x="15.4" y="10.4" width="1.5" height="1.5"/></g></svg>
<svg class="i" style="left:91px;top:80px;" width="17" height="16"><path d="M1.6 7.4L5 1.6H11.6L15 7.4L11.6 13.2H5Z" fill="none" stroke="#1414b4" stroke-width="1.7"/><path d="M8.3 4.8v5.2M5.7 7.4h5.2" stroke="#222" stroke-width="1"/></svg>
<svg class="i" style="left:125px;top:33px;" width="19" height="17"><path d="M2 14.5C2 6 4.5 4.5 7 7.5C9.5 10.5 13.4 14 16 8.5C17 6 16.6 3 16.6 1.5" fill="none" stroke="#1414c8" stroke-width="2.2" stroke-linecap="round"/></svg>
<svg class="i" style="left:125px;top:57px;" width="19" height="17"><ellipse cx="9.6" cy="8.2" rx="8.6" ry="4" transform="rotate(-42 9.6 8.2)" fill="none" stroke="#1414b4" stroke-width="1.8"/><path d="M8.6 5.6l2.4 2.4M11 5.6l-2.4 2.4" stroke="#222" stroke-width=".8"/></svg>
<svg class="i" style="left:125px;top:79px;" width="19" height="18"><path d="M1.5 2H6" stroke="#111" stroke-width="2"/><path d="M6 2C12 2 16.5 6 16.5 12" fill="none" stroke="#1414c8" stroke-width="2"/><path d="M16.5 12V17.5" stroke="#111" stroke-width="2"/><path d="M8 10.4v4.4M5.8 12.6h4.4" stroke="#222" stroke-width=".9"/></svg>
<svg class="i" style="left:166px;top:37px;" width="11" height="11"><path d="M5.4 .8v9.4M.7 5.5h9.4M2 2.1l6.8 6.8M8.8 2.1L2 8.9" stroke="#1414c8" stroke-width="1.15"/></svg>
<svg class="i" style="left:78px;top:42px;" width="6" height="4"><path d="M0 0H5.6L2.8 3.4Z" fill="#333"/></svg>
<svg class="i" style="left:78px;top:65px;" width="6" height="4"><path d="M0 0H5.6L2.8 3.4Z" fill="#333"/></svg>
<svg class="i" style="left:78px;top:88px;" width="6" height="4"><path d="M0 0H5.6L2.8 3.4Z" fill="#333"/></svg>
<svg class="i" style="left:114px;top:42px;" width="6" height="4"><path d="M0 0H5.6L2.8 3.4Z" fill="#333"/></svg>
<svg class="i" style="left:114px;top:65px;" width="6" height="4"><path d="M0 0H5.6L2.8 3.4Z" fill="#333"/></svg>
<svg class="i" style="left:150px;top:42px;" width="6" height="4"><path d="M0 0H5.6L2.8 3.4Z" fill="#333"/></svg>
<svg class="i" style="left:150px;top:65px;" width="6" height="4"><path d="M0 0H5.6L2.8 3.4Z" fill="#333"/></svg>
<svg class="i" style="left:150px;top:88px;" width="6" height="4"><path d="M0 0H5.6L2.8 3.4Z" fill="#333"/></svg>
<svg class="i" style="left:199px;top:34px;" width="19" height="19"><ellipse cx="4.6" cy="5.2" rx="3.4" ry="1.7" transform="rotate(24 4.6 5.2)" fill="none" stroke="#1a35e0" stroke-width="1.5"/><ellipse cx="4.6" cy="9.6" rx="3.4" ry="1.7" transform="rotate(-24 4.6 9.6)" fill="none" stroke="#1a35e0" stroke-width="1.5"/><path d="M7.4 6.6L17 4.4L17 6.6L9 8.2Z" fill="#8a8a8e"/><path d="M7.4 8.2L17 8.4L17 10.4L9 8.2Z" fill="#5a5a5e"/><path d="M10.6 1.4V18" stroke="#1a35e0" stroke-width="2"/><path d="M1.5 13.6H17.5" stroke="#1a35e0" stroke-width="2"/></svg>
<svg class="t" role="img" aria-label="剪裁实" style="left:191px;top:51.6px" width="38" height="19" fill="#1c1c22" stroke="#1c1c22" stroke-width="22"><text stroke-width=".26" x="0" y="12.20" font-size="12">剪裁实</text></svg>
<svg class="t" role="img" aria-label="体(T)" style="left:196.8px;top:65px" width="26" height="19" fill="#1c1c22" stroke="#1c1c22" stroke-width="22"><text stroke-width=".26" x="0" y="12.20" font-size="12">体</text><text stroke-width=".28" x="12.00" y="12.20" font-size="10.80" textLength="11.86" lengthAdjust="spacingAndGlyphs" xml:space="preserve">(T)</text></svg>
<svg class="i" style="left:206px;top:91px;" width="6" height="4"><path d="M0 0H5.6L2.8 3.4Z" fill="#333"/></svg>
<svg class="i" style="left:245px;top:34px;" width="19" height="19"><path d="M2.4 2.3H13L17.4 6.6V17.2H6.5L2.4 12.9Z" fill="#eceef2" stroke="#111" stroke-width="1.2" stroke-linejoin="round"/><path d="M6.5 17.2V6.6H17.4M6.5 6.6L2.4 2.3" fill="none" stroke="#111" stroke-width="1.1"/><path d="M7.6 6.8V17" stroke="#1a35e0" stroke-width="2.2"/></svg>
<svg class="t" role="img" aria-label="转换实" style="left:236.8px;top:51.6px" width="38" height="19" fill="#1c1c22" stroke="#1c1c22" stroke-width="22"><text stroke-width=".26" x="0" y="12.20" font-size="12">转换实</text></svg>
<svg class="t" role="img" aria-label="体引用" style="left:236.8px;top:65px" width="38" height="19" fill="#1c1c22" stroke="#1c1c22" stroke-width="22"><text stroke-width=".26" x="0" y="12.20" font-size="12">体引用</text></svg>
<svg class="i" style="left:252px;top:91px;" width="6" height="4"><path d="M0 0H5.6L2.8 3.4Z" fill="#333"/></svg>
<svg class="i" style="left:292px;top:42px;" width="18" height="18"><path d="M1.5 2H16V10L9.5 16.5" fill="none" stroke="#111" stroke-width="2"/><path d="M1.5 6.4H11.4L4.6 16.5" fill="none" stroke="#1414c8" stroke-width="2.2"/></svg>
<svg class="t" role="img" aria-label="等距实" style="left:283px;top:58px" width="38" height="19" fill="#1c1c22" stroke="#1c1c22" stroke-width="22"><text stroke-width=".26" x="0" y="12.20" font-size="12">等距实</text></svg>
<svg class="t" role="img" aria-label="体" style="left:295px;top:71.8px" width="14" height="19" fill="#1c1c22" stroke="#1c1c22" stroke-width="22"><text stroke-width=".26" x="0" y="12.20" font-size="12">体</text></svg>
<svg class="i" style="left:325px;top:33px;" width="18" height="17"><path d="M9 2.2C5.2 2.6 6 9.4 1.8 13.8H9" fill="none" stroke="#333" stroke-width="2"/><path d="M9 2.2C12.8 2.6 12 9.4 16.2 13.8H9" fill="none" stroke="#1414b4" stroke-width="2"/><path d="M9 .5V17" stroke="#111" stroke-width="1.6" stroke-dasharray="2.2 1.6"/></svg>
<svg class="t" role="img" aria-label="镜向实体" style="left:349px;top:35.2px" width="50" height="19" fill="#1c1c22" stroke="#1c1c22" stroke-width="22"><text stroke-width=".26" x="0" y="12.20" font-size="12">镜向实体</text></svg>
<svg class="i" style="left:325px;top:56px;" width="18" height="18"><rect x="1" y="0.8" width="3.6" height="3.6" fill="#1414c8"/><rect x="2.1" y="1.9" width="1.4" height="1.4" fill="#8aa0ff"/><rect x="6.6" y="0.8" width="3.6" height="3.6" fill="#1414c8"/><rect x="7.7" y="1.9" width="1.4" height="1.4" fill="#8aa0ff"/><rect x="12.2" y="0.8" width="3.6" height="3.6" fill="#1414c8"/><rect x="13.3" y="1.9" width="1.4" height="1.4" fill="#8aa0ff"/><rect x="1" y="6.4" width="3.6" height="3.6" fill="#1414c8"/><rect x="2.1" y="7.5" width="1.4" height="1.4" fill="#8aa0ff"/><rect x="6.6" y="6.4" width="3.6" height="3.6" fill="#1414c8"/><rect x="7.7" y="7.5" width="1.4" height="1.4" fill="#8aa0ff"/><rect x="12.2" y="6.4" width="3.6" height="3.6" fill="#1414c8"/><rect x="13.3" y="7.5" width="1.4" height="1.4" fill="#8aa0ff"/><rect x="1" y="12" width="3.6" height="3.6" fill="#111"/><rect x="2.1" y="13.1" width="1.4" height="1.4" fill="#d0d0d0"/><rect x="6.6" y="12" width="3.6" height="3.6" fill="#1414c8"/><rect x="7.7" y="13.1" width="1.4" height="1.4" fill="#8aa0ff"/><rect x="12.2" y="12" width="3.6" height="3.6" fill="#1414c8"/><rect x="13.3" y="13.1" width="1.4" height="1.4" fill="#8aa0ff"/></svg>
<svg class="t" role="img" aria-label="线性草图阵列" style="left:349px;top:58.2px" width="74" height="19" fill="#1c1c22" stroke="#1c1c22" stroke-width="22"><text stroke-width=".26" x="0" y="12.20" font-size="12">线性草图阵列</text></svg>
<svg class="i" style="left:447px;top:65px;" width="6" height="4"><path d="M0 0H5.6L2.8 3.4Z" fill="#333"/></svg>
<svg class="i" style="left:325px;top:79px;" width="18" height="18"><rect x="1.6" y="1.4" width="7" height="7" fill="none" stroke="#111" stroke-width="1.5" stroke-dasharray="1.5 1.3"/><path d="M2.5 10.5L7.6 15.6" stroke="#b00000" stroke-width="1.6"/><path d="M8.6 16.6L4.6 16 L8 12.6Z" fill="#b00000"/><rect x="10" y="9.6" width="6.6" height="6.6" fill="#fff" stroke="#111" stroke-width="1.6"/></svg>
<svg class="t" role="img" aria-label="移动实体" style="left:349px;top:81.2px" width="50" height="19" fill="#1c1c22" stroke="#1c1c22" stroke-width="22"><text stroke-width=".26" x="0" y="12.20" font-size="12">移动实体</text></svg>
<svg class="i" style="left:447px;top:88px;" width="6" height="4"><path d="M0 0H5.6L2.8 3.4Z" fill="#333"/></svg>
<svg class="i" style="left:476px;top:34px;" width="18" height="19"><path d="M2.2 16.8H17" stroke="#111" stroke-width="2"/><path d="M9.6 1V16" stroke="#111" stroke-width="1.4"/><circle cx="4.6" cy="10.2" r="2.9" fill="#c8dcff" stroke="#3a4f8a" stroke-width="1"/><circle cx="11.4" cy="11.4" r="2.9" fill="#c8dcff" stroke="#3a4f8a" stroke-width="1"/><path d="M2.4 8C3 4.6 5 3.4 6.4 4M13.6 9.4C14.6 6.4 15.8 5.4 17 5.8" fill="none" stroke="#444" stroke-width="1"/></svg>
<svg class="t" role="img" aria-label="显示/删" style="left:465px;top:51.6px" width="42" height="19" fill="#1c1c22" stroke="#1c1c22" stroke-width="22"><text stroke-width=".26" x="0" y="12.20" font-size="12">显示</text><text stroke-width=".28" x="24.00" y="12.20" font-size="12.00" textLength="3.33" lengthAdjust="spacingAndGlyphs" xml:space="preserve">/</text><text stroke-width=".26" x="27.33" y="12.20" font-size="12">删</text></svg>
<svg class="t" role="img" aria-label="除几..." style="left:468px;top:65px" width="36" height="19" fill="#1c1c22" stroke="#1c1c22" stroke-width="22"><text stroke-width=".26" x="0" y="12.20" font-size="12">除几</text><text stroke-width=".28" x="24.00" y="12.20" font-size="12.00" textLength="9.50" lengthAdjust="spacingAndGlyphs" xml:space="preserve">...</text></svg>
<svg class="i" style="left:482px;top:91px;" width="6" height="4"><path d="M0 0H5.6L2.8 3.4Z" fill="#333"/></svg>
<svg class="i" style="left:523px;top:34px;" width="22" height="18"><path d="M1 2.5H21" stroke="#9a9ca1" stroke-width="1.6"/><path d="M1.6 2V8" stroke="#9a9ca1" stroke-width="1.2"/><circle cx="14" cy="10.8" r="5.6" fill="none" stroke="#a2a4a9" stroke-width="1"/><circle cx="14" cy="10.8" r="1.7" fill="#9a9ca1"/></svg>
<svg class="t" role="img" aria-label="快速捕" style="left:517.8px;top:51.6px" width="38" height="19" fill="#8d96a6" stroke="#8d96a6" stroke-width="22"><text stroke-width=".26" x="0" y="12.20" font-size="12">快速捕</text></svg>
<svg class="t" role="img" aria-label="捉" style="left:530px;top:65px" width="14" height="19" fill="#8d96a6" stroke="#8d96a6" stroke-width="22"><text stroke-width=".26" x="0" y="12.20" font-size="12">捉</text></svg>
<svg class="i" style="left:532.5px;top:91px;" width="6" height="4"><path d="M0 0H5.6L2.8 3.4Z" fill="#8f9196"/></svg>
<div style="left:0px;top:125px;width:188px;height:644px;background:#e3e5eb"></div>
<div style="left:176px;top:125px;width:13px;height:2px;background:#fff"></div>
<div style="left:188px;top:126px;width:1px;height:643px;background:#1e1f22"></div>
<div style="left:0px;top:106px;width:231px;height:19px;background:#a9aaae"></div>
<div style="left:0px;top:124px;width:231px;height:1px;background:#1e1f22"></div>
<div style="left:64px;top:106px;width:1px;height:19px;background:#1e1f22"></div>
<div style="left:120px;top:106px;width:1px;height:19px;background:#1e1f22"></div>
<div style="left:230px;top:106px;width:1px;height:19px;background:#1e1f22"></div>
<div style="left:121px;top:105px;width:54px;height:21px;background:#d6d9de"></div>
<div style="left:120px;top:124px;width:1px;height:3px;background:#1e1f22"></div>
<div style="left:120px;top:126px;width:56px;height:1px;background:#1e1f22"></div>
<div style="left:175px;top:105px;width:1px;height:22px;background:#1e1f22"></div>
<svg class="t" role="img" aria-label="视图布局" style="left:8px;top:105.6px" width="50" height="19" fill="#333338" stroke="#333338" stroke-width="22"><text stroke-width=".26" x="0" y="12.20" font-size="12">视图布局</text></svg>
<svg class="t" role="img" aria-label="注解" style="left:80px;top:105.6px" width="26" height="19" fill="#333338" stroke="#333338" stroke-width="22"><text stroke-width=".26" x="0" y="12.20" font-size="12">注解</text></svg>
<svg class="t" role="img" aria-label="草图" style="left:136px;top:105.6px" width="26" height="19" fill="#1c1c22" stroke="#1c1c22" stroke-width="22"><text stroke-width=".26" x="0" y="12.20" font-size="12">草图</text></svg>
<svg class="t" role="img" aria-label="评估" style="left:192px;top:105.6px" width="26" height="19" fill="#333338" stroke="#333338" stroke-width="22"><text stroke-width=".26" x="0" y="12.20" font-size="12">评估</text></svg>
<div style="left:0px;top:128px;width:188px;height:1px;background:#eceef4"></div>
<div style="left:0px;top:129px;width:188px;height:1px;background:#c9cbe1"></div>
<div style="left:0px;top:130px;width:188px;height:1px;background:#a3a5c5"></div>
<div style="left:0px;top:131px;width:188px;height:1px;background:#8f91b0"></div>
<div style="left:0px;top:157px;width:188px;height:1px;background:#1e1f22"></div>
<div style="left:2px;top:136px;width:28px;height:22px;box-sizing:border-box;border:1px solid #1e1f22;background:#a9aaae"></div>
<div style="left:30px;top:136px;width:28px;height:23px;box-sizing:border-box;border:1px solid #1e1f22;border-bottom:none;background:#e3e5eb"></div>
<svg class="i" style="left:8px;top:140px;" width="17" height="15"><rect x=".8" y=".8" width="15" height="13" rx="1" fill="#fff" stroke="#0a0a14" stroke-width="1.5"/>
<rect x="2.8" y="2.8" width="5.4" height="2.4" rx=".4" fill="#ffe600" stroke="#14141e" stroke-width=".8"/><path d="M3 10.6V8.6H4.8V7H6.4V8.6H8.4V10.6Z" fill="#ffe600" stroke="#14141e" stroke-width=".8" stroke-linejoin="round"/>
<rect x="10.4" y="2.8" width="3" height="2.4" rx=".4" fill="#ffd000" stroke="#14141e" stroke-width=".8"/><rect x="10.8" y="7.6" width="4" height="1.2" fill="#9fd0f6"/><rect x="10.8" y="9.6" width="4" height="2.6" fill="#cfe8fb"/></svg>
<svg class="i" style="left:35px;top:138px;" width="19" height="18"><rect x="1.5" y="5.5" width="13" height="11.4" fill="#f4f6fa" stroke="#46568c" stroke-width="1"/><rect x="2" y="6" width="12" height="1.4" fill="#7a88b4"/><rect x="3.4" y="8.6" width="2.4" height="2.4" fill="#f5b020" stroke="#b07810" stroke-width=".5"/><rect x="3.4" y="12" width="2.4" height="2.4" fill="#e0e0e0" stroke="#888" stroke-width=".5"/><rect x="7.2" y="7.8" width="5.6" height="2.8" fill="#b9d6f4" stroke="#7f9cc0" stroke-width=".5"/><path d="M7.2 13.2H12.8" stroke="#999" stroke-width="1"/>
<path d="M5.2 6.2 L9.8 1.8 L16.8 1.4 L17.2 3.8 L12.4 5.2 L9 8.2 Z" fill="#e8b36a" stroke="#8a5a20" stroke-width=".8" stroke-linejoin="round"/><path d="M6.6 5.8 L10 2.6 M8 6.8 L11.2 3.8" stroke="#8a5a20" stroke-width=".6"/></svg>
<div style="left:4px;top:163px;width:179px;height:24px;box-sizing:border-box;border:1px solid #1e1f22;background:#a9aaae;box-shadow:inset 1px 1px 0 #c3c4c8"></div>
<svg class="i" style="left:7px;top:166px;" width="17" height="17"><defs><linearGradient id="ti" x1="0" y1="0" x2="0" y2="1"><stop offset="0" stop-color="#fff"/><stop offset=".55" stop-color="#f2f7fd"/><stop offset="1" stop-color="#a9cdf2"/></linearGradient></defs>
<path d="M.8 1.4H11.6L15.6 5.4V15.4H.8Z" fill="url(#ti)" stroke="#0c0c0c" stroke-width="1.3" stroke-linejoin="miter"/>
<path d="M2.4 5.9L4.6 3.4L6 4.6L7.2 3.2L9.6 3.6L10.6 6.8L13.4 8.4V11.2L10.2 14.3L2.8 7.9Z" fill="#ffe600" stroke="#1a1200" stroke-width=".9" stroke-linejoin="round"/>
<path d="M7.6 5.6C8.4 5 9.2 5.6 8.8 6.6C8.4 7.6 9.2 8.6 10.4 8.4M10.2 14.3L10.4 11.4L13.4 8.6" fill="none" stroke="#8a5a00" stroke-width=".9"/><path d="M3.4 6.6L9.6 12.2" stroke="#fff6a0" stroke-width="1.2"/></svg>
<svg class="t" role="img" aria-label="工程图视图" style="left:26px;top:166.2px" width="82" height="24" fill="#1e1e22" stroke="#1e1e22" stroke-width="50"><text stroke-width="0" x="0" y="15.60" font-size="16" font-weight="bold">工程图视图</text></svg>
<svg class="t" role="img" aria-label="4" style="left:106.2px;top:166.6px" width="9" height="24" fill="#1e1e22" stroke="#1e1e22" stroke-width="22"><text stroke-width="0" x="0.00" y="15.24" font-size="14.40" textLength="6.89" lengthAdjust="spacingAndGlyphs" font-weight="bold" xml:space="preserve">4</text></svg>
<div class="lt" style="left:167px;top:165.5px;font-size:15.5px;font-weight:bold;color:#f2f2f4;text-shadow:0 1px 0 #c8c8cc">?</div>
<svg class="i" style="left:5px;top:192px;" width="19" height="16"><path d="M2 8.6L5.8 12.8L16 3" fill="none" stroke="#0a6a0a" stroke-width="3.2" opacity=".35" transform="translate(.7 .8)"/><path d="M2 8.6L5.8 12.8L16 3" fill="none" stroke="#1fc81f" stroke-width="2.7"/></svg>
<div style="left:0px;top:220px;width:188px;height:1px;background:#1e1f22"></div>
<div style="left:166px;top:221px;width:22px;height:548px;background:linear-gradient(90deg,#e4e5e9 0,#f6f6f7 3px,#f0f0f1 100%)"></div>
<svg class="i" style="left:174px;top:228.5px;" width="8" height="5"><path d="M0 4.2L3.6 .4L7.2 4.2Z" fill="#555"/></svg>
<div style="left:169px;top:240px;width:15px;height:380px;box-sizing:border-box;border:1px solid #9a9a9e;border-radius:2px;background:linear-gradient(90deg,#fbfbfb 0%,#ececee 35%,#cfcfd3 70%,#bebec3 100%)"></div>
<div style="left:172.5px;top:426px;width:7.5px;height:1.2px;background:#555"></div>
<div style="left:172.5px;top:429.5px;width:7.5px;height:1.2px;background:#555"></div>
<div style="left:172.5px;top:433px;width:7.5px;height:1.2px;background:#555"></div>
<div style="left:5px;top:222px;width:160px;height:55px;box-sizing:border-box;border:1px solid #1e1f22;background:#dadde2"></div>
<div style="left:6px;top:223px;width:158px;height:18px;background:#a9aaae"></div>
<div style="left:6px;top:241px;width:158px;height:1px;background:#1e1f22"></div>
<svg class="t" role="img" aria-label="参考配置(R)" style="left:9.5px;top:223.6px" width="66" height="20" fill="#1a1a1e" stroke="#1a1a1e" stroke-width="0"><text stroke-width="0" x="0" y="12.54" font-size="12.4" font-weight="bold">参考配置</text><text stroke-width="0" x="49.60" y="12.54" font-size="11.00" textLength="14.05" lengthAdjust="spacingAndGlyphs" font-weight="bold" xml:space="preserve">(R)</text></svg>
<svg class="i" style="left:150.5px;top:227.5px;" width="8" height="10"><path d="M.8 4.4L4 1.2L7.2 4.4M.8 8.6L4 5.4L7.2 8.6" fill="none" stroke="#111" stroke-width="1.4"/></svg>
<svg class="i" style="left:12px;top:247px;" width="19" height="20"><path d="M2.2 1V19" stroke="#888" stroke-width="1"/><path d="M3.8 1V19" stroke="#333" stroke-width="1"/><path d="M4 6H8M4 15H10" stroke="#333" stroke-width="1"/>
<rect x="7.4" y="2.6" width="7" height="6.6" rx="1.6" fill="#ffd400" stroke="#1a1a1a" stroke-width="1.2"/><rect x="9.8" y="11.4" width="7" height="6.6" rx="1.6" fill="#ffd400" stroke="#1a1a1a" stroke-width="1.2"/><rect x="9" y="4" width="2.4" height="2" fill="#fff6a0"/><rect x="11.4" y="12.8" width="2.4" height="2" fill="#fff6a0"/></svg>
<div style="left:41px;top:247px;width:116px;height:21px;box-sizing:border-box;border:1px solid #85868b;border-radius:3px;background:linear-gradient(#fdfdfd 0%,#f1f1f2 45%,#e1e1e3 55%,#d6d6d9 100%)"></div>
<div class="lt" style="left:45.5px;top:250.6px;font-size:11.8px;color:#1a1020">Default</div>
<svg class="i" style="left:145px;top:255.5px;" width="8" height="5"><path d="M0 0H7.4L3.7 4.6Z" fill="#111"/></svg>
<div style="left:5px;top:284px;width:160px;height:242px;box-sizing:border-box;border:1px solid #1e1f22;background:#dadde2"></div>
<div style="left:6px;top:285px;width:158px;height:18px;background:#a9aaae"></div>
<div style="left:6px;top:303px;width:158px;height:1px;background:#1e1f22"></div>
<svg class="t" role="img" aria-label="方向(O)" style="left:9.5px;top:285.6px" width="42" height="20" fill="#1a1a1e" stroke="#1a1a1e" stroke-width="0"><text stroke-width="0" x="0" y="12.54" font-size="12.4" font-weight="bold">方向</text><text stroke-width="0" x="24.80" y="12.54" font-size="11.00" textLength="14.61" lengthAdjust="spacingAndGlyphs" font-weight="bold" xml:space="preserve">(O)</text></svg>
<svg class="i" style="left:150.5px;top:289.5px;" width="8" height="10"><path d="M.8 4.4L4 1.2L7.2 4.4M.8 8.6L4 5.4L7.2 8.6" fill="none" stroke="#111" stroke-width="1.4"/></svg>
<svg class="t" role="img" aria-label="标准视图:" style="left:41px;top:306.2px" width="54" height="19" fill="#1a1a22" stroke="#1a1a22" stroke-width="22"><text stroke-width=".26" x="0" y="12.20" font-size="12">标准视图</text><text stroke-width=".28" x="48.00" y="12.20" font-size="12.00" textLength="3.33" lengthAdjust="spacingAndGlyphs" xml:space="preserve">:</text></svg>
<div style="left:95px;top:338px;width:23px;height:23px;box-sizing:border-box;border:1px solid #a2a3a7;background:linear-gradient(#ececee,#dedfe2);box-shadow:inset 0 0 0 1px #f4f4f6"></div>
<div style="left:122px;top:338px;width:23px;height:23px;box-sizing:border-box;border:1px solid #6e6f73;background:#a6a7ab;box-shadow:inset 0 0 0 1px #9a9b9f"></div>
<div style="left:41px;top:365px;width:23px;height:23px;box-sizing:border-box;border:1px solid #a2a3a7;background:linear-gradient(#ececee,#dedfe2);box-shadow:inset 0 0 0 1px #f4f4f6"></div>
<div style="left:68px;top:365px;width:23px;height:23px;box-sizing:border-box;border:1px solid #a2a3a7;background:linear-gradient(#ececee,#dedfe2);box-shadow:inset 0 0 0 1px #f4f4f6"></div>
<div style="left:95px;top:365px;width:23px;height:23px;box-sizing:border-box;border:1px solid #a2a3a7;background:linear-gradient(#ececee,#dedfe2);box-shadow:inset 0 0 0 1px #f4f4f6"></div>
<div style="left:122px;top:365px;width:23px;height:23px;box-sizing:border-box;border:1px solid #a2a3a7;background:linear-gradient(#ececee,#dedfe2);box-shadow:inset 0 0 0 1px #f4f4f6"></div>
<div style="left:95px;top:393px;width:23px;height:23px;box-sizing:border-box;border:1px solid #a2a3a7;background:linear-gradient(#ececee,#dedfe2);box-shadow:inset 0 0 0 1px #f4f4f6"></div>
<svg class="i" style="left:96px;top:341px;" width="20" height="16"><defs><linearGradient id="vb" x1="0" y1="0" x2="1" y2="1"><stop offset="0" stop-color="#fff"/><stop offset=".5" stop-color="#eef4fd"/><stop offset="1" stop-color="#b7d0f2"/></linearGradient></defs><rect x="1.6" y="1.6" width="16" height="12" rx="1.6" fill="url(#vb)" stroke="#111" stroke-width="1.5"/><path d="M11 1.6V13.6" stroke="#111" stroke-width="1.5"/></svg>
<svg class="i" style="left:124px;top:341px;" width="20" height="18"><path d="M2 3.4C5 1 9 1.4 11 3.2L16.6 9.6V13.4L9.6 16.2L4.2 12.8C2 10 1.4 6 2 3.4Z" fill="#b9babe" stroke="#6a6b70" stroke-width="1"/><path d="M2 3.4L8.2 8.8L9.6 16.2M8.2 8.8L16.6 9.6M8.2 8.8C9.4 6.6 10.6 4.6 11 3.2" fill="none" stroke="#6a6b70" stroke-width=".9"/></svg>
<svg class="i" style="left:42px;top:368px;" width="20" height="16"><path d="M1.6 13.4V8L7.6 1.6H16Q17.4 1.6 17.4 3V12Q17.4 13.4 16 13.4Z" fill="url(#vb)" stroke="#111" stroke-width="1.5" stroke-linejoin="round"/></svg>
<svg class="i" style="left:70px;top:368px;" width="20" height="16"><rect x="2.6" y="1.6" width="12.6" height="12" rx="1.6" fill="url(#vb)" stroke="#111" stroke-width="1.5"/><path d="M4.6 8.4H13.4" stroke="#111" stroke-width="1" stroke-dasharray="1.8 1"/></svg>
<svg class="i" style="left:96px;top:368px;" width="20" height="16"><path d="M1.6 3Q1.6 1.6 3 1.6H11.4L17.4 8V13.4H3Q1.6 13.4 1.6 12Z" fill="url(#vb)" stroke="#111" stroke-width="1.5" stroke-linejoin="round"/></svg>
<svg class="i" style="left:124px;top:368px;" width="20" height="16"><rect x="2.8" y="1.6" width="12.6" height="12" rx="1.6" fill="url(#vb)" stroke="#111" stroke-width="1.5"/><path d="M2.8 8.6H15.4" stroke="#111" stroke-width="1.5"/></svg>
<svg class="i" style="left:96px;top:396px;" width="20" height="16"><rect x="1.6" y="1.6" width="16" height="12" rx="1.6" fill="url(#vb)" stroke="#111" stroke-width="1.5"/><path d="M11.6 3V12.4" stroke="#111" stroke-width="1" stroke-dasharray="2 1.2"/></svg>
<svg class="t" role="img" aria-label="更多视图:" style="left:41px;top:423.2px" width="54" height="19" fill="#1a1a22" stroke="#1a1a22" stroke-width="22"><text stroke-width=".26" x="0" y="12.20" font-size="12">更多视图</text><text stroke-width=".28" x="48.00" y="12.20" font-size="12.00" textLength="3.33" lengthAdjust="spacingAndGlyphs" xml:space="preserve">:</text></svg>
<div style="left:41px;top:448px;width:118px;height:70px;box-sizing:border-box;border:1px solid #85868b;background:#fff"></div>
<div style="left:44px;top:451px;width:13px;height:12.5px;box-sizing:border-box;border:1px solid #8e8f93;background:linear-gradient(135deg,#d9dade,#f6f6f8);box-shadow:inset 0 0 0 1px #f4f4f6"></div>
<div style="left:44px;top:464px;width:13px;height:12.5px;box-sizing:border-box;border:1px solid #8e8f93;background:linear-gradient(135deg,#d9dade,#f6f6f8);box-shadow:inset 0 0 0 1px #f4f4f6"></div>
<svg class="t" role="img" aria-label="*上下二等角轴测" style="left:59px;top:449.4px" width="91" height="19" fill="#000" stroke="#000" stroke-width="22"><text stroke-width="0" x="0.00" y="13.20" font-size="12.00" textLength="4.67" lengthAdjust="spacingAndGlyphs" xml:space="preserve">*</text><text stroke-width=".26" x="4.67" y="12.20" font-size="12">上下二等角轴测</text></svg>
<svg class="t" role="img" aria-label="*左右二等角轴测" style="left:59px;top:463px" width="91" height="19" fill="#000" stroke="#000" stroke-width="22"><text stroke-width="0" x="0.00" y="13.20" font-size="12.00" textLength="4.67" lengthAdjust="spacingAndGlyphs" xml:space="preserve">*</text><text stroke-width=".26" x="4.67" y="12.20" font-size="12">左右二等角轴测</text></svg>
<div style="left:43px;top:500px;width:114px;height:16px;background:#efeff1"></div>
<svg class="i" style="left:48.5px;top:503.6px;" width="5" height="8"><path d="M4.6 0V7L.4 3.5Z" fill="#444"/></svg>
<svg class="i" style="left:147px;top:503.6px;" width="5" height="8"><path d="M.2 0V7L4.4 3.5Z" fill="#444"/></svg>
<div style="left:61px;top:500px;width:65px;height:15px;box-sizing:border-box;border:1px solid #9a9a9e;border-radius:2px;background:linear-gradient(#f8f8f8 0%,#e9e9eb 45%,#d2d2d6 55%,#c8c8cc 100%)"></div>
<div style="left:89.6px;top:503.6px;width:1.2px;height:7.6px;background:#555"></div>
<div style="left:93px;top:503.6px;width:1.2px;height:7.6px;background:#555"></div>
<div style="left:96.4px;top:503.6px;width:1.2px;height:7.6px;background:#555"></div>
<div style="left:5px;top:533px;width:160px;height:20px;box-sizing:border-box;border:1px solid #1e1f22;background:#dadde2"></div>
<div style="left:6px;top:534px;width:158px;height:18px;background:#a9aaae"></div>
<svg class="t" role="img" aria-label="输入选项" style="left:9.5px;top:534.6px" width="52" height="20" fill="#1a1a1e" stroke="#1a1a1e" stroke-width="0"><text stroke-width="0" x="0" y="12.54" font-size="12.4" font-weight="bold">输入选项</text></svg>
<svg class="i" style="left:150.5px;top:538.5px;" width="8" height="10"><path d="M.8 4.4L4 1.2L7.2 4.4M.8 8.6L4 5.4L7.2 8.6" fill="none" stroke="#111" stroke-width="1.4" transform="translate(0 10) scale(1 -1)"/></svg>
<div style="left:5px;top:565px;width:160px;height:99px;box-sizing:border-box;border:1px solid #1e1f22;background:#dadde2"></div>
<div style="left:6px;top:566px;width:158px;height:18px;background:#a9aaae"></div>
<div style="left:6px;top:584px;width:158px;height:1px;background:#1e1f22"></div>
<svg class="t" role="img" aria-label="显示状态(D)" style="left:9.5px;top:566.6px" width="66" height="20" fill="#1a1a1e" stroke="#1a1a1e" stroke-width="0"><text stroke-width="0" x="0" y="12.54" font-size="12.4" font-weight="bold">显示状态</text><text stroke-width="0" x="49.60" y="12.54" font-size="11.00" textLength="14.05" lengthAdjust="spacingAndGlyphs" font-weight="bold" xml:space="preserve">(D)</text></svg>
<svg class="i" style="left:150.5px;top:570.5px;" width="8" height="10"><path d="M.8 4.4L4 1.2L7.2 4.4M.8 8.6L4 5.4L7.2 8.6" fill="none" stroke="#111" stroke-width="1.4"/></svg>
<svg class="i" style="left:12px;top:591px;" width="19" height="19"><g stroke="#a86e00" stroke-width=".8" stroke-linejoin="round">
<path d="M1.2 2.8L5.5 1.4L16.8 9.4L11.5 11.4Z" fill="#ffec3a"/><path d="M1.2 2.8L11.5 11.4V17.6L1.2 7.9Z" fill="#ffe100"/><path d="M11.5 11.4L16.8 9.4V14.5L11.5 17.6Z" fill="#f2b400"/>
<path d="M6.4 2.2L10.8 1.4L12.7 2.6L8 3.7Z" fill="#fff27a"/><path d="M6.4 2.2L8 3.7V8L6.4 6.6Z" fill="#ffd800"/><path d="M8 3.7L12.7 2.6V6.4L8 8Z" fill="#ffe100"/></g>
<path d="M2.2 4.4L10.6 11.4" stroke="#fffbc0" stroke-width="1.1"/></svg>
<div style="left:41px;top:588px;width:116px;height:68px;box-sizing:border-box;border:1px solid #85868b;background:#fff"></div>
<div style="left:43px;top:590px;width:112px;height:13px;background:#3399ff"></div>
<div class="lt" style="left:45.5px;top:589.9px;font-size:11.3px;color:#fff;width:109.5px;overflow:hidden;white-space:nowrap;letter-spacing:.05px">&lt;Default&gt;_Display St</div>
<div style="left:43px;top:638px;width:112px;height:16px;background:#ebebed"></div>
<svg class="i" style="left:48.5px;top:642.4px;" width="5" height="8"><path d="M4.6 0V7L.4 3.5Z" fill="#444"/></svg>
<svg class="i" style="left:145px;top:642.4px;" width="5" height="8"><path d="M.2 0V7L4.4 3.5Z" fill="#444"/></svg>
<div style="left:61px;top:638.5px;width:15px;height:14.5px;box-sizing:border-box;border:1px solid #9a9a9e;border-radius:2px;background:linear-gradient(#f8f8f8 0%,#e9e9eb 45%,#d2d2d6 55%,#c8c8cc 100%)"></div>
<div style="left:5px;top:671px;width:160px;height:110px;box-sizing:border-box;border:1px solid #1e1f22;background:#dadde2"></div>
<div style="left:6px;top:672px;width:158px;height:18px;background:#a9aaae"></div>
<div style="left:6px;top:690px;width:158px;height:1px;background:#1e1f22"></div>
<svg class="t" role="img" aria-label="显示样式(S)" style="left:9.5px;top:672.6px" width="66" height="20" fill="#1a1a1e" stroke="#1a1a1e" stroke-width="0"><text stroke-width="0" x="0" y="12.54" font-size="12.4" font-weight="bold">显示样式</text><text stroke-width="0" x="49.60" y="12.54" font-size="11.00" textLength="13.49" lengthAdjust="spacingAndGlyphs" font-weight="bold" xml:space="preserve">(S)</text></svg>
<svg class="i" style="left:150.5px;top:676.5px;" width="8" height="10"><path d="M.8 4.4L4 1.2L7.2 4.4M.8 8.6L4 5.4L7.2 8.6" fill="none" stroke="#111" stroke-width="1.4"/></svg>
<div style="left:41px;top:694px;width:23px;height:23px;box-sizing:border-box;border:1px solid #a2a3a7;background:linear-gradient(#ececee,#dedfe2);box-shadow:inset 0 0 0 1px #f4f4f6"></div>
<div style="left:66.4px;top:694px;width:23px;height:23px;box-sizing:border-box;border:1px solid #a2a3a7;background:linear-gradient(#ececee,#dedfe2);box-shadow:inset 0 0 0 1px #f4f4f6"></div>
<div style="left:92px;top:694px;width:23px;height:23px;box-sizing:border-box;border:1px solid #a2a3a7;background:linear-gradient(#ececee,#dedfe2);box-shadow:inset 0 0 0 1px #f4f4f6"></div>
<div style="left:117px;top:694px;width:23px;height:23px;box-sizing:border-box;border:1px solid #6e6f73;background:#a6a7ab;box-shadow:inset 0 0 0 1px #9a9b9f"></div>
<div style="left:143px;top:694px;width:21px;height:23px;box-sizing:border-box;border:1px solid #a2a3a7;border-right:none;background:linear-gradient(#ececee,#dedfe2);box-shadow:inset 1px 0 0 #f4f4f6,inset 0 1px 0 #f4f4f6,inset 0 -1px 0 #f4f4f6"></div>
<svg class="i" style="left:43.5px;top:697px;" width="19" height="18"><path d="M1.6 5.6L5.6 1.8H16.2V12.2L12.4 16H1.6Z M1.6 5.6H12.4V16 M12.4 5.6L16.2 1.8" fill="none" stroke="#222" stroke-width="1.1" stroke-linejoin="round"/><path d="M5.6 1.8V12.2H16.2M5.6 12.2L1.6 16" fill="none" stroke="#222" stroke-width="1"/></svg>
<svg class="i" style="left:69px;top:697px;" width="19" height="18"><path d="M1.6 5.6L5.6 1.8H16.2V12.2L12.4 16H1.6Z M1.6 5.6H12.4V16 M12.4 5.6L16.2 1.8" fill="none" stroke="#222" stroke-width="1.1" stroke-linejoin="round"/><path d="M5.6 1.8V12.2H16.2M5.6 12.2L1.6 16" fill="none" stroke="#555" stroke-width=".8" stroke-dasharray="1.4 1.4"/></svg>
<svg class="i" style="left:94.5px;top:697px;" width="19" height="18"><path d="M1.6 5.6L5.6 1.8H16.2V12.2L12.4 16H1.6Z M1.6 5.6H12.4V16 M12.4 5.6L16.2 1.8" fill="none" stroke="#222" stroke-width="1.1" stroke-linejoin="round"/></svg>
<svg class="i" style="left:119.5px;top:697px;" width="19" height="18"><defs><linearGradient id="cb1" x1="0" y1="0" x2="1" y2="1"><stop offset="0" stop-color="#a9c4ee"/><stop offset="1" stop-color="#5e86cc"/></linearGradient></defs><path d="M1.6 5.6L5.6 1.8H16.2V12.2L12.4 16H1.6Z" fill="url(#cb1)" stroke="#1c2a4a" stroke-width="1.1" stroke-linejoin="round"/><path d="M1.6 5.6H12.4V16M12.4 5.6L16.2 1.8" fill="none" stroke="#1c2a4a" stroke-width="1"/><path d="M12.4 5.6L16.2 1.8V12.2L12.4 16Z" fill="#4a6fb4"/></svg>
<svg class="i" style="left:145.5px;top:697px;" width="18" height="18"><defs><linearGradient id="cb2" x1="0" y1="0" x2="1" y2="1"><stop offset="0" stop-color="#8fb6ff"/><stop offset="1" stop-color="#2a62f0"/></linearGradient></defs><path d="M1.6 5.6L5.6 1.8H16.2V12.2L12.4 16H1.6Z" fill="url(#cb2)"/><path d="M12.4 5.6L16.2 1.8V12.2L12.4 16Z" fill="#2450d8"/><path d="M1.6 5.6L5.6 1.8H16.2L12.4 5.6Z" fill="#6f9cff"/></svg>
<svg class="i" style="left:41px;top:728.2px;" width="12" height="12"><defs><radialGradient id="rd0" cx=".4" cy=".35" r=".7"><stop offset="0" stop-color="#fff"/><stop offset="1" stop-color="#d4d5d9"/></radialGradient><radialGradient id="rb" cx=".4" cy=".35" r=".7"><stop offset="0" stop-color="#7fd0ff"/><stop offset=".5" stop-color="#1580c8"/><stop offset="1" stop-color="#0a3a70"/></radialGradient></defs><circle cx="6" cy="6" r="5.3" fill="url(#rd0)" stroke="#8e8f93" stroke-width="1"/></svg>
<svg class="i" style="left:41px;top:748.2px;" width="12" height="12"><defs><radialGradient id="rd1" cx=".4" cy=".35" r=".7"><stop offset="0" stop-color="#fff"/><stop offset="1" stop-color="#d4d5d9"/></radialGradient><radialGradient id="rb" cx=".4" cy=".35" r=".7"><stop offset="0" stop-color="#7fd0ff"/><stop offset=".5" stop-color="#1580c8"/><stop offset="1" stop-color="#0a3a70"/></radialGradient></defs><circle cx="6" cy="6" r="5.3" fill="url(#rd1)" stroke="#8e8f93" stroke-width="1"/><circle cx="6" cy="6" r="2.8" fill="url(#rb)"/></svg>
<svg class="t" role="img" aria-label="高品质(H)" style="left:57.5px;top:726.6px" width="51" height="19" fill="#1a1a22" stroke="#1a1a22" stroke-width="22"><text stroke-width=".26" x="0" y="12.20" font-size="12">高品质</text><text stroke-width=".28" x="36.00" y="12.20" font-size="10.80" textLength="12.89" lengthAdjust="spacingAndGlyphs" xml:space="preserve">(H)</text></svg>
<svg class="t" role="img" aria-label="草稿品质(Q)" style="left:57.5px;top:746.4px" width="64" height="19" fill="#1a1a22" stroke="#1a1a22" stroke-width="22"><text stroke-width=".26" x="0" y="12.20" font-size="12">草稿品质</text><text stroke-width=".28" x="48.00" y="12.20" font-size="10.80" textLength="13.41" lengthAdjust="spacingAndGlyphs" xml:space="preserve">(Q)</text></svg>
<svg class="i" style="left:188px;top:445px;" width="10" height="41"><path d="M.5 .5H8.5V39.5H.5" fill="#e9ebf0" stroke="#1e1f22" stroke-width="1"/><path d="M1 .9V39" stroke="#e9ebf0" stroke-width="1.4"/><path d="M6 7.2V11.8L3 9.5ZM6 16.2V20.8L3 18.5ZM6 25.2V29.8L3 27.5Z" fill="#444"/></svg>
</div></body></html>
